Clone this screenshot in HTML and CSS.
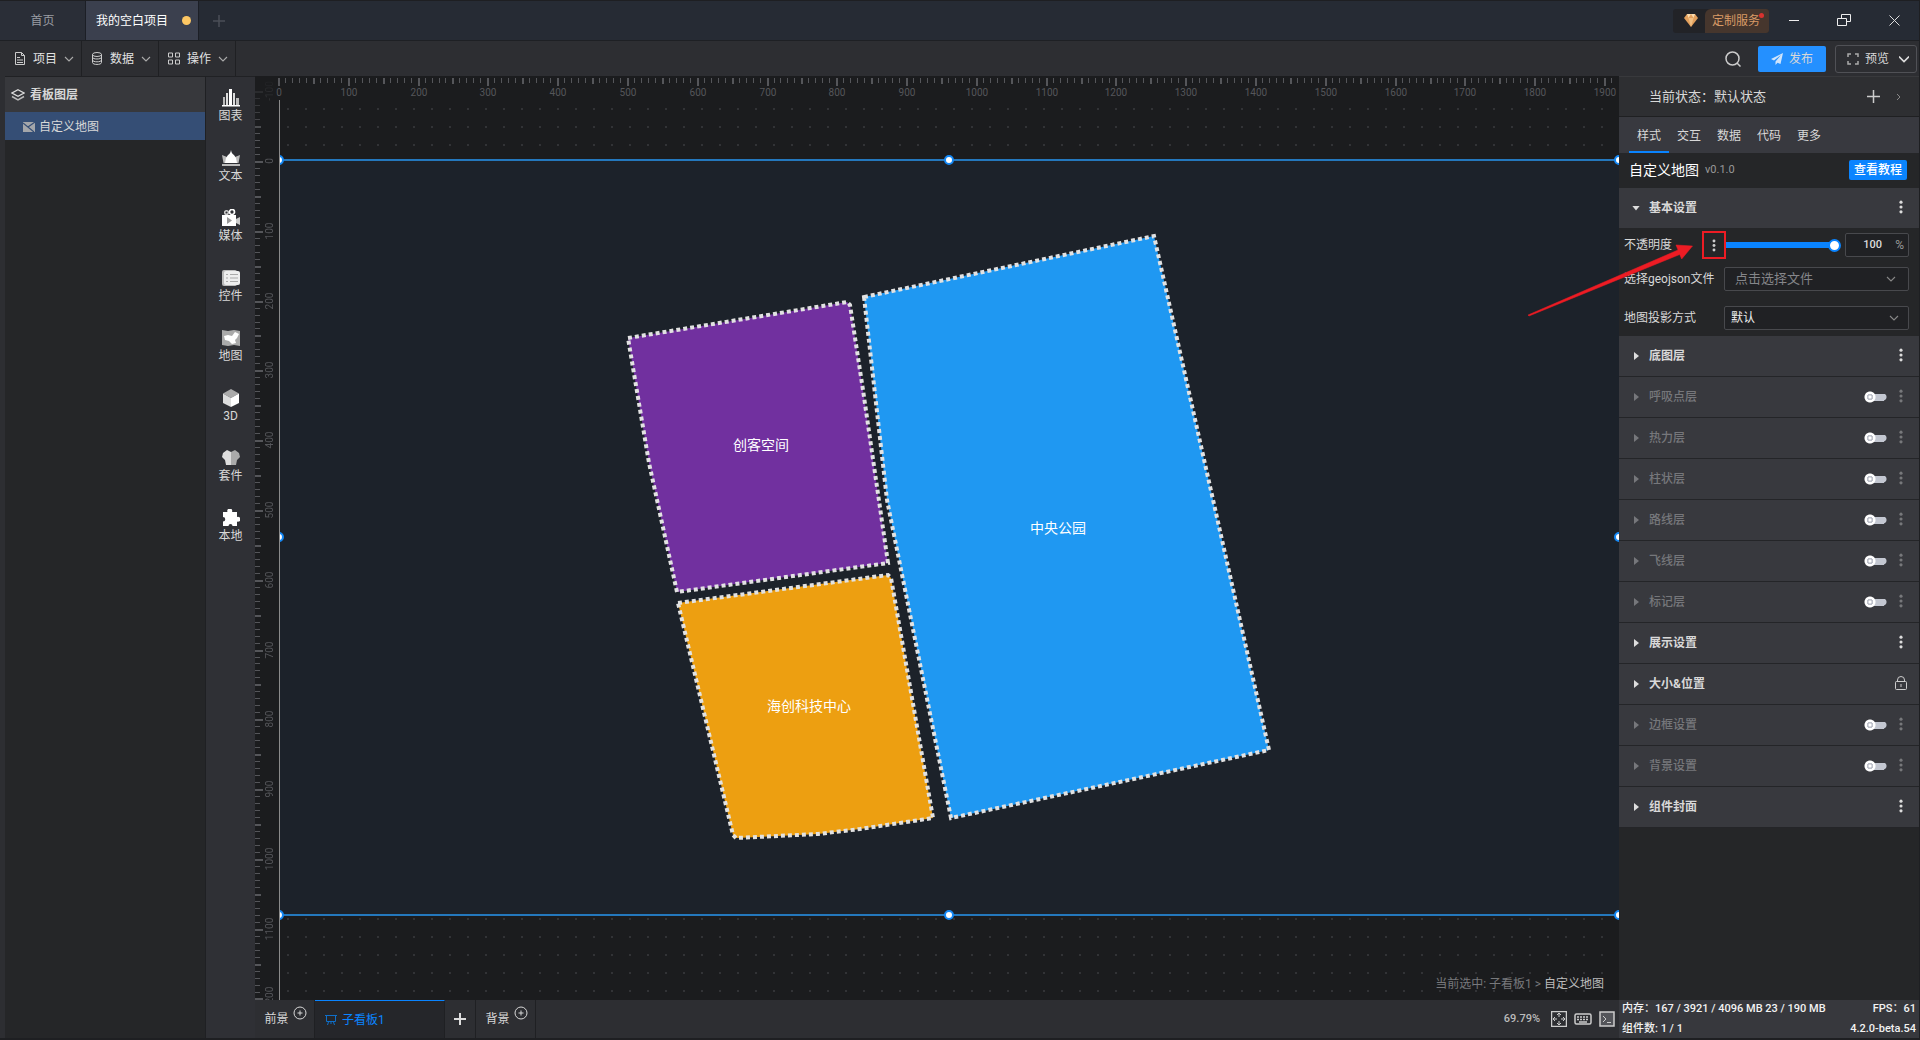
FILE: index.html
```html
<!DOCTYPE html>
<html lang="zh-CN">
<head>
<meta charset="utf-8">
<title>我的空白项目</title>
<link rel="stylesheet" href="styles.css">
</head>
<body>
<svg class="sprite" aria-hidden="true">
  <symbol id="chevron" viewBox="0 0 10 10"><path d="M1 3l4 4 4-4" fill="none" stroke="currentColor" stroke-width="1.1"/></symbol>
  <symbol id="more" viewBox="0 0 4 16"><circle cx="2" cy="2.5" r="1.8"/><circle cx="2" cy="8" r="1.8"/><circle cx="2" cy="13.5" r="1.8"/></symbol>
  <symbol id="add" viewBox="0 0 14 14"><circle cx="7" cy="7" r="6" fill="none" stroke="currentColor"/><path d="M4.500 7h5M7 4.500v5" stroke="currentColor"/></symbol>
</svg>

<header class="titlebar">
  <nav class="tabs">
    <a class="tab tab-home" href="#">首页</a>
    <a class="tab tab-active" href="#">我的空白项目<span class="unsaved"></span></a>
    <button class="tab-new" aria-label="新建"><svg width="12" height="12"><path d="M6 0v12M0 6h12" stroke="#4b4f57" stroke-width="1.500"/></svg></button>
  </nav>
  <a class="service" href="#">
    <span class="service-gem"><svg width="14" height="13" viewBox="0 0 14 13"><path d="M3 0h8l3 4-7 9-7-9z" fill="#e3a05c"/><path d="M3 0l1.500 4L7 0l2.500 4L11 0z" fill="#fbdcae"/><path d="M4.500 4h5L7 13z" fill="#f2bf83"/></svg></span>
    <span class="service-text">定制服务</span>
    <span class="service-dot"></span>
  </a>
  <div class="window-buttons">
    <button aria-label="最小化"><svg width="10" height="14"><path d="M0 6.500h10" stroke="#eee"/></svg></button>
    <button aria-label="还原"><svg width="14" height="13" fill="none" stroke="#eee"><path d="M.5 4.500h9v7h-9zM4.500 4.500v-4h9v7h-4"/></svg></button>
    <button aria-label="关闭"><svg width="11" height="11"><path d="M.5.5l10 10M10.500.5l-10 10" stroke="#ddd"/></svg></button>
  </div>
</header>

<div class="toolbar">
  <button class="menu"><svg width="12" height="13" fill="none" stroke="#ccc"><path d="M1.500.5h6l3 3v9h-9zM7.500.5v3h3M3 5.500h3M3 8h6M3 10.500h6"/></svg>项目<svg class="chev"><use href="#chevron"/></svg></button>
  <button class="menu"><svg width="12" height="13" fill="none" stroke="#ccc"><ellipse cx="6" cy="2.500" rx="4.500" ry="2"/><path d="M1.500 2.500v8c0 2.600 9 2.600 9 0v-8M1.500 5.200c0 2.400 9 2.400 9 0M1.500 8c0 2.400 9 2.400 9 0"/></svg>数据<svg class="chev"><use href="#chevron"/></svg></button>
  <button class="menu"><svg width="12" height="13" fill="none" stroke="#ccc"><path d="M.5 1h4v4h-4zM7.500 1h4v4h-4zM.5 8h4v4h-4zM7.500 8h4v4h-4z"/></svg>操作<svg class="chev"><use href="#chevron"/></svg></button>
  <div class="toolbar-actions">
    <button class="search" aria-label="搜索"><svg width="16" height="16" fill="none" stroke="#ccc" stroke-width="1.500"><circle cx="7.500" cy="7.500" r="6.500"/><path d="M12 12l3.500 3.500"/></svg></button>
    <button class="publish"><svg width="12" height="12"><path d="M12 0L0 6l3 1.500L10 2 4.500 8.500V12l2-2.200L9.500 11z" fill="#cfe4fb"/></svg>发布</button>
    <button class="preview"><svg width="12" height="12" fill="none" stroke="#aaa" stroke-width="1.500"><path d="M1 4V1h3M8 1h3v3M11 8v3H8M4 11H1V8"/></svg>预览<svg class="chev" viewBox="0 0 10 10"><path d="M0 2.500l5 5 5-5" fill="none" stroke="#ddd" stroke-width="1.600"/></svg></button>
  </div>
</div>

<main class="workspace">
  <aside class="layers">
    <h2 class="layers-title"><svg width="14" height="12" fill="none" stroke="#ddd"><path d="M7 .8l6 3.200-6 3.200L1 4z" stroke-width="1.300"/><path d="M1 7.500l6 3.400 6-3.400" stroke="#bbb" stroke-width="1.500"/></svg>看板图层</h2>
    <a class="layer" href="#"><svg width="12" height="10"><path d="M0 0h12v10H0z" fill="#a4a6aa"/><path d="M0 1l11 9M12 0L5 5" stroke="#354e75" stroke-width="1.200"/></svg>自定义地图</a>
  </aside>

  <nav class="rail">
    <a href="#"><svg width="18" height="18"><path d="M1 8h2v8H1zM14 9h3v7h-3z" fill="#bbb"/><path d="M4 4h2v12H4zM11 4h2v12h-2z" fill="#ddd"/><path d="M7 0h3v16H7zM0 16h18v1.500H0z" fill="#fff"/></svg>图表</a>
    <a href="#"><svg width="18" height="18"><path d="M0 6l5 2 8 0 5-2-1.500 8h-15z" fill="#bbb"/><path d="M9 1c.5 3 1.500 4 3 5l2 3 1 5H3l1-5 2-3c1.500-1 2.500-2 3-5z" fill="#fff"/><path d="M0 15h18v2H0z" fill="#bbb"/></svg>文本</a>
    <a href="#"><svg width="18" height="18"><circle cx="4.500" cy="3.500" r="1.800" fill="none" stroke="#ccc" stroke-width="1.500"/><circle cx="10" cy="3" r="2.500" fill="none" stroke="#fff" stroke-width="1.700"/><path d="M0 6h14v11H0z" fill="#fff"/><path d="M14 10l4-2v8l-4-2z" fill="#ccc"/><path d="M5 8l5 3.500L5 15z" fill="#999"/></svg>媒体</a>
    <a href="#"><svg width="18" height="18"><rect width="15" height="16" y="1" rx="2" fill="#bbb"/><rect x="2" y="2" width="16" height="14" rx="2" fill="#eee"/><path d="M4 5.500h2M4 9h2M4 12.500h2M8 5.500h8M8 9h8M8 12.500h8" stroke="#aaa"/></svg>控件</a>
    <a href="#"><svg width="18" height="18"><path d="M0 1l6 1 6-1 6 1v15l-6-1-6 1-6-1z" fill="#aaa"/><path d="M2 7l4-1 4 1 3-4 4 2-2 4-2 2 1 3-4 1-3-3-4-1z" fill="#fff"/></svg>地图</a>
    <a href="#"><svg width="18" height="18"><path d="M9 0l8 4.500L9 9 1 4.500z" fill="#aaa"/><path d="M1 4.500L9 9v9l-8-4z" fill="#ddd"/><path d="M17 4.500L9 9v9l8-4z" fill="#fff"/></svg>3D</a>
    <a href="#"><svg width="18" height="18"><path d="M5 1L1 4 0 8l3 3 1 5h5V3z" fill="#ddd"/><path d="M13 1l4 3 1 4-3 3-1 5H9V3z" fill="#aaa"/></svg>套件</a>
    <a href="#"><svg width="18" height="18"><path d="M1 3h4.500a2.500 2.500 0 1 1 4.500 0h5v5a2.500 2.500 0 1 1 0 4.500V17h-4.500a2 2 0 0 0-4 0H1v-4.500a2.200 2.200 0 0 0 0-4.500z" fill="#fff"/></svg>本地</a>
  </nav>

  <section class="editor">
    <div class="canvas">
      <svg class="ruler ruler-x" id="ruler-x"></svg>
      <svg class="ruler ruler-y" id="ruler-y"></svg>
      <div class="stage">
        <div class="artboard">
          <svg class="map" viewBox="280 161 1340 754" width="1340" height="754">
            <g stroke="#e2e2e2" stroke-width="4" stroke-dasharray="4 3">
              <path d="M628 338L847 302 850 305 863 390 888 563 677 592 649 463z" fill="#71309f"/>
              <path d="M864 297L1154 236 1269 750 951 818 887 500z" fill="#1f98f2"/>
              <path d="M678 603L888 575 891 578 933 818 860 829 818 834 736 838 733 835z" fill="#ed9f11"/>
            </g>
            <g class="map-labels">
              <text x="761" y="450">创客空间</text>
              <text x="1058" y="533">中央公园</text>
              <text x="809" y="711">海创科技中心</text>
            </g>
          </svg>
          <i class="handle top left"></i><i class="handle top mid"></i><i class="handle top right"></i>
          <i class="handle center left"></i><i class="handle center right"></i>
          <i class="handle bottom left"></i><i class="handle bottom mid"></i><i class="handle bottom right"></i>
        </div>
        <p class="selection">当前选中: 子看板1 &gt; <b>自定义地图</b></p>
      </div>
    </div>
    <footer class="boards">
      <button class="board board-side">前景<svg class="plus"><use href="#add"/></svg></button>
      <button class="board board-active"><svg width="12" height="12" fill="none" stroke="#0f6fc9"><path d="M0 1.500h12M1.500 1.500v6h9v-6M3.500 8l-1 3M8.500 8l1 3M6 8v2"/></svg>子看板1</button>
      <button class="board board-add" aria-label="添加"><svg width="12" height="12"><path d="M6 0v12M0 6h12" stroke="#ddd" stroke-width="2"/></svg></button>
      <button class="board board-side">背景<svg class="plus"><use href="#add"/></svg></button>
      <div class="view-tools">
        <span class="zoom">69.79%</span>
        <button aria-label="适应画布"><svg width="16" height="16" fill="none" stroke="#ccc"><path d="M.5.500h15v15H.5z" stroke-width="1.500"/><path d="M8 2v4M6 4l2-2 2 2M8 14v-4M6 12l2 2 2-2M2 8h4M4 6L2 8l2 2M14 8h-4M12 6l2 2-2 2"/></svg></button>
        <button aria-label="快捷键"><svg width="18" height="12" fill="none" stroke="#ccc" stroke-width="1.500"><rect x="1" y="1" width="16" height="10" rx="1.500"/><path d="M3 4h12M3 6.500h12" stroke-dasharray="2 1"/><path d="M5 9h8"/></svg></button>
        <button aria-label="控制台"><svg width="16" height="16" fill="none" stroke="#ccc"><path d="M1 1h14v14H1z" fill="#54555a" stroke-width="1.500"/><path d="M4 5l3 3-3 3M8 11.500h4"/></svg></button>
      </div>
    </footer>
  </section>

  <aside class="inspector">
    <div class="state">当前状态：默认状态
      <button class="state-add" aria-label="添加状态"><svg width="13" height="13"><path d="M6.500 0v13M0 6.500h13" stroke="#ccc" stroke-width="1.500"/></svg></button>
      <button aria-label="展开"><svg width="4" height="8" fill="none" stroke="#888"><path d="M0 1l3 3-3 3"/></svg></button>
    </div>
    <nav class="inspector-tabs"><a class="current" href="#">样式</a><a href="#">交互</a><a href="#">数据</a><a href="#">代码</a><a href="#">更多</a></nav>
    <div class="component"><h1>自定义地图</h1><span class="version">v0.1.0</span><a class="tutorial" href="#">查看教程</a></div>

    <section class="group open"><h3>基本设置</h3><svg class="more"><use href="#more"/></svg></section>
    <div class="fields">
      <div class="field opacity">
        <label for="opacity">不透明度</label>
        <button class="opacity-more" aria-label="更多"><svg class="more small"><use href="#more"/></svg></button>
        <input class="slider" id="opacity" type="range" min="0" max="100" value="100">
        <span class="percent"><input type="text" value="100" aria-label="不透明度数值"><span>%</span></span>
        <svg class="arrow" viewBox="0 0 166 76" width="166" height="76"><path d="M0 74L150 9l-2-5 16.500 1L153.700 18l-2-4.500L1 75z" fill="#ed1c24" stroke="#ed1c24" stroke-width=".5"/></svg>
      </div>
      <div class="field file"><label for="file">选择geojson文件</label><span class="picker"><select id="file" class="placeholder"><option>点击选择文件</option></select><svg class="chev"><use href="#chevron"/></svg></span></div>
      <div class="field projection"><label for="proj">地图投影方式</label><span class="picker"><select id="proj"><option>默认</option></select><svg class="chev"><use href="#chevron"/></svg></span></div>
    </div>
    <section class="group"><h3>底图层</h3><svg class="more"><use href="#more"/></svg></section>
    <section class="group off"><h3>呼吸点层</h3><input type="checkbox" aria-label="呼吸点层"><svg class="more"><use href="#more"/></svg></section>
    <section class="group off"><h3>热力层</h3><input type="checkbox" aria-label="热力层"><svg class="more"><use href="#more"/></svg></section>
    <section class="group off"><h3>柱状层</h3><input type="checkbox" aria-label="柱状层"><svg class="more"><use href="#more"/></svg></section>
    <section class="group off"><h3>路线层</h3><input type="checkbox" aria-label="路线层"><svg class="more"><use href="#more"/></svg></section>
    <section class="group off"><h3>飞线层</h3><input type="checkbox" aria-label="飞线层"><svg class="more"><use href="#more"/></svg></section>
    <section class="group off"><h3>标记层</h3><input type="checkbox" aria-label="标记层"><svg class="more"><use href="#more"/></svg></section>
    <section class="group"><h3>展示设置</h3><svg class="more"><use href="#more"/></svg></section>
    <section class="group"><h3>大小&amp;位置</h3><svg class="lock" width="12" height="14" fill="none" stroke="#ccc"><rect x=".5" y="5.500" width="11" height="8" rx="1"/><path d="M2.500 5.500V4a3.500 3.500 0 0 1 7 0v1.500M6 8v3"/></svg></section>
    <section class="group off"><h3>边框设置</h3><input type="checkbox" aria-label="边框设置"><svg class="more"><use href="#more"/></svg></section>
    <section class="group off"><h3>背景设置</h3><input type="checkbox" aria-label="背景设置"><svg class="more"><use href="#more"/></svg></section>
    <section class="group"><h3>组件封面</h3><svg class="more"><use href="#more"/></svg></section>

    <footer class="status">
      <div><span>内存：167 / 3921 / 4096 MB 23 / 190 MB</span><span>FPS：61</span></div>
      <div><span>组件数: 1 / 1</span><span>4.2.0-beta.54</span></div>
    </footer>
  </aside>
</main>
<script src="ruler.js"></script>
</body>
</html>
```

FILE: styles.css
```css
* { box-sizing: border-box; }
body {
  margin: 0;
  height: 100vh;
  display: flex;
  flex-direction: column;
  overflow: hidden;
  border: solid #1e1f22;
  border-width: 1px 1px 2px 0;
  background: #2d2e32;
  color: #d8d8d8;
  font: 12px/16px Roboto, "Noto Sans CJK SC", sans-serif;
}
a { color: inherit; text-decoration: none; }
button { font: inherit; color: inherit; background: none; border: 0; padding: 0; display: flex; align-items: center; justify-content: center; }
h1, h2, h3, p { margin: 0; }
svg { flex: none; display: block; }
.sprite { position: absolute; width: 0; height: 0; }
.chev { width: 10px; height: 10px; }

.titlebar { display: flex; align-items: center; height: 40px; background: #262b34; border-bottom: 1px solid #1e2024; }
.tabs { display: flex; height: 100%; flex: 1; }
.tab { display: flex; align-items: center; border-right: 1px solid #1c1f26; }
.tab-home { width: 86px; justify-content: center; color: #9a9da3; background: #2a2e37; }
.tab-active { width: 113px; padding-left: 10px; gap: 14px; background: #3b404e; color: #fff; }
.unsaved { width: 9px; height: 9px; border-radius: 50%; background: #fdc763; }
.tab-new { width: 40px; }
.service { position: relative; display: flex; height: 24px; border-radius: 3px; overflow: hidden; background: #222327; }
.service-gem { display: flex; align-items: center; justify-content: center; width: 32px; padding-left: 4px; }
.service-text { padding: 4px 9px 4px 7px; background: #46362d; color: #d99a66; border-radius: 6px 0 0 0; white-space: nowrap; }
.service-dot { position: absolute; top: 4px; right: 5px; width: 5px; height: 5px; border-radius: 50%; background: #d8322f; }
.window-buttons { display: flex; }
.window-buttons button { width: 50px; height: 39px; }

.toolbar { display: flex; height: 35px; background: #2d2e32; }
.menu { width: 77px; border-right: 1px solid #1f2023; gap: 7px; padding-left: 2px; color: #e2e2e2; }
.menu:first-child { margin-left: 5px; }
.menu .chev { color: #aaa; }
.toolbar-actions { display: flex; align-items: center; margin-left: auto; gap: 9px; padding-right: 2px; }
.search { margin-right: 8px; }
.publish { width: 68px; height: 26px; gap: 6px; background: #2490ff; border-radius: 2px; }
.preview { width: 82px; height: 28px; gap: 6px; padding-left: 4px; border: 1px solid #505156; border-radius: 3px; }
.preview .chev { margin-left: 4px; }

.workspace { display: flex; flex: 1; min-height: 0; }
.layers { width: 201px; margin-left: 5px; border-top: 1px solid #202124; border-right: 1px solid #1f2023; background: #252628; }
.layers-title { display: flex; align-items: center; gap: 5px; height: 35px; padding-left: 6px; font-size: 12px; background: #37383c; }
.layer { display: flex; align-items: center; gap: 4px; height: 28px; padding: 2px 0 0 18px; background: #354e75; }
.rail { width: 49px; border-top: 1px solid #202124; background: #2f3035; }
.rail a { display: flex; flex-direction: column; align-items: center; gap: 1px; height: 60px; padding-top: 12px; }

.editor { flex: 1; min-width: 0; display: flex; flex-direction: column; }
.canvas { flex: 1; min-height: 0; display: grid; grid-template: 24px 1fr / 24px 1fr; background: #1b1c1e; overflow: hidden; }
.ruler { width: 100%; height: 100%; font-size: 10px; fill: #55565a; }
.ruler-x { grid-area: 1 / 1 / 2 / 3; }
.ruler-y { grid-area: 1 / 1 / 3 / 2; mask-image: linear-gradient(transparent, #000 60px); }
.stage {
  grid-area: 2 / 2;
  position: relative;
  overflow: hidden;
  border-left: 1px solid #8a8a8a;
  background: linear-gradient(#343538, #343538) 0 0 / 0 0, conic-gradient(from 270deg at 2px 2px, #323336 90deg, transparent 90deg) 7px 8px / 18px 18px;
}
.artboard { position: absolute; top: 59px; left: 0; right: 0; height: 757px; border: solid #2478bd; border-width: 2px 0; background: #1c222a; }
.map { overflow: visible; }
.map-labels { font-size: 14px; fill: #fff; text-anchor: middle; }
.handle { position: absolute; width: 10px; height: 10px; border: 2px solid #1488f5; border-radius: 50%; background: #fff; }
.handle.top { top: -6px; }
.handle.center { top: calc(50% - 6px); }
.handle.bottom { bottom: -6px; }
.handle.left { left: -6px; }
.handle.mid { left: calc(50% - 6px); }
.handle.right { right: -5px; }
.selection { position: absolute; right: 15px; bottom: 8px; color: #77787b; }
.selection b { font-weight: 400; color: #bbb; }

.boards { display: flex; height: 38px; }
.board { border-right: 1px solid #1f2023; }
.board-side { width: 60px; gap: 4px; padding-left: 2px; }
.plus { width: 14px; height: 14px; margin-bottom: 12px; }
.board-active { width: 130px; padding-left: 10px; gap: 5px; justify-content: flex-start; color: #0a84ff; background: #25262a; border-top: 1px solid #0a84ff; }
.board-add { width: 31px; }
.view-tools { display: flex; align-items: center; margin-left: auto; padding-right: 4px; gap: 7px; }
.zoom { margin-right: 4px; font-size: 11px; font-weight: 500; color: #bbb; }

.inspector { width: 300px; display: flex; flex-direction: column; border-top: 1px solid #38393c; background: #252628; }
.state { display: flex; align-items: center; height: 40px; padding: 0 18px 0 30px; gap: 17px; font-size: 13px; background: #2e2f32; border-bottom: 1px solid #1f2022; }
.state-add { margin-left: auto; }
.inspector-tabs { display: flex; height: 36px; padding-left: 10px; background: #38393f; }
.inspector-tabs a { width: 40px; padding-top: 11px; text-align: center; border-bottom: 2px solid transparent; }
.inspector-tabs .current { border-color: #0a84ff; }
.component { display: flex; align-items: center; height: 35px; padding: 0 12px 2px 10px; gap: 6px; }
.component h1 { font-size: 14px; font-weight: 400; color: #fff; }
.version { font-size: 11px; color: #999; }
.tutorial { margin-left: auto; height: 20px; padding: 2px 5px; border-radius: 2px; background: #0a84ff; color: #fff; font-weight: 500; }

.group { display: flex; align-items: center; height: 41px; padding: 0 16px 0 15px; background: #38393e; border-bottom: 1px solid #242528; }
.group::before { content: ""; width: 5px; height: 8px; margin-right: 10px; background: #ddd; clip-path: polygon(0 0, 100% 50%, 0 100%); }
.group.open { height: 40px; border: 0; padding-left: 13px; }
.group.open::before { width: 8px; height: 5px; margin-right: 9px; clip-path: polygon(0 0, 100% 0, 50% 100%); }
.group h3 { flex: 1; font-size: 12px; font-weight: 700; }
.more { width: 4px; height: 14px; fill: #ddd; }
.group .more, .lock { margin-bottom: 2px; }
.small { height: 13px; fill: #ccc; }
.off { color: #76777b; }
.off h3 { font-weight: 500; }
.off::before { background: #76777b; }
.off .more { fill: #77787b; }
.lock { margin-right: -4px; }
.group input {
  appearance: none;
  width: 23px;
  height: 12px;
  margin: 0 12px 0 0;
  background:
    radial-gradient(circle at 6px 6px, #fff 1px, #bfc2cb 2px, #bfc2cb 3px, #fff 3px, #fff 5px, transparent 6px) 0 0 / 12px 12px no-repeat,
    linear-gradient(#c3c7d1, #c3c7d1) 8px 3px / 12px 7px no-repeat,
    radial-gradient(circle at 3px 3px, #c3c7d1 3px, transparent 4px) 16px 3px / 7px 7px no-repeat;
}

.fields { height: 108px; padding: 5px 10px 6px 5px; }
.field { display: flex; align-items: center; height: 24px; }
.field label { width: 100px; white-space: nowrap; }
.opacity { position: relative; margin-bottom: 10px; }
.file { margin-bottom: 15px; }
.opacity label { width: 78px; }
.opacity-more { width: 24px; height: 28px; border: 2px solid #ed1c24; }
.slider { appearance: none; width: 115px; height: 14px; margin: 0 4px 0 0; background: linear-gradient(#0a84ff, #0a84ff) 0 50% / 112px 6px no-repeat; }
.slider::-webkit-slider-thumb { appearance: none; width: 13px; height: 13px; border: 2px solid #0a84ff; border-radius: 50%; background: #fff; }
.percent { display: flex; align-items: center; flex: 1; height: 24px; padding-right: 4px; border: 1px solid #48494d; border-radius: 2px; background: #202124; color: #999; }
.percent input { flex: 1; width: 20px; padding: 0 0 0 4px; border: 0; background: none; text-align: center; color: #ddd; font: 500 11px/16px Roboto, sans-serif; }
.arrow { position: absolute; left: -96px; top: 8px; }
.picker { display: flex; align-items: center; flex: 1; height: 24px; padding-right: 9px; border: 1px solid #48494d; border-radius: 2px; background: #202124; color: #888; }
.picker select { appearance: none; flex: 1; padding: 0 0 0 6px; border: 0; background: none; color: #eee; font: inherit; }
.picker .placeholder { padding-left: 10px; color: #85868a; font-size: 13px; }
.file .picker { padding-right: 12px; }

.status { margin-top: auto; height: 38px; display: flex; flex-direction: column; justify-content: space-between; padding: 1px 3px; background: #37383d; color: #f2f2f2; font-size: 11px; font-weight: 500; white-space: pre; }
.status div { display: flex; justify-content: space-between; }
```

FILE: ruler.js
```js
const SVG = "http://www.w3.org/2000/svg";
const ORIGIN_X = 24;
const ORIGIN_Y = 85;
const STEP = 6.979;

function node(parent, name, attrs, text) {
  const el = document.createElementNS(SVG, name);
  for (const key in attrs) el.setAttribute(key, attrs[key]);
  if (text !== undefined) el.textContent = text;
  parent.appendChild(el);
}

function drawRuler(id, origin, first, last, vertical) {
  const svg = document.getElementById(id);
  for (let i = first; i <= last; i++) {
    const pos = Math.round(origin + i * STEP);
    const major = i % 10 === 0;
    const half = i % 5 === 0;
    const length = major ? 8 : half ? 6 : 5;
    const thick = half ? 2 : 1;
    node(svg, "rect", vertical
      ? { x: 0, y: pos, width: length, height: thick }
      : { x: pos - 1, y: 2, width: thick, height: length });
    if (major) {
      const attrs = vertical
        ? { x: 0, y: 0, transform: `translate(18 ${pos}) rotate(-90)` }
        : { x: pos, y: 20 };
      attrs["text-anchor"] = "middle";
      node(svg, "text", attrs, i * 10);
    }
  }
}

drawRuler("ruler-x", ORIGIN_X, 0, 191, false);
drawRuler("ruler-y", ORIGIN_Y, -10, 120, true);
```
